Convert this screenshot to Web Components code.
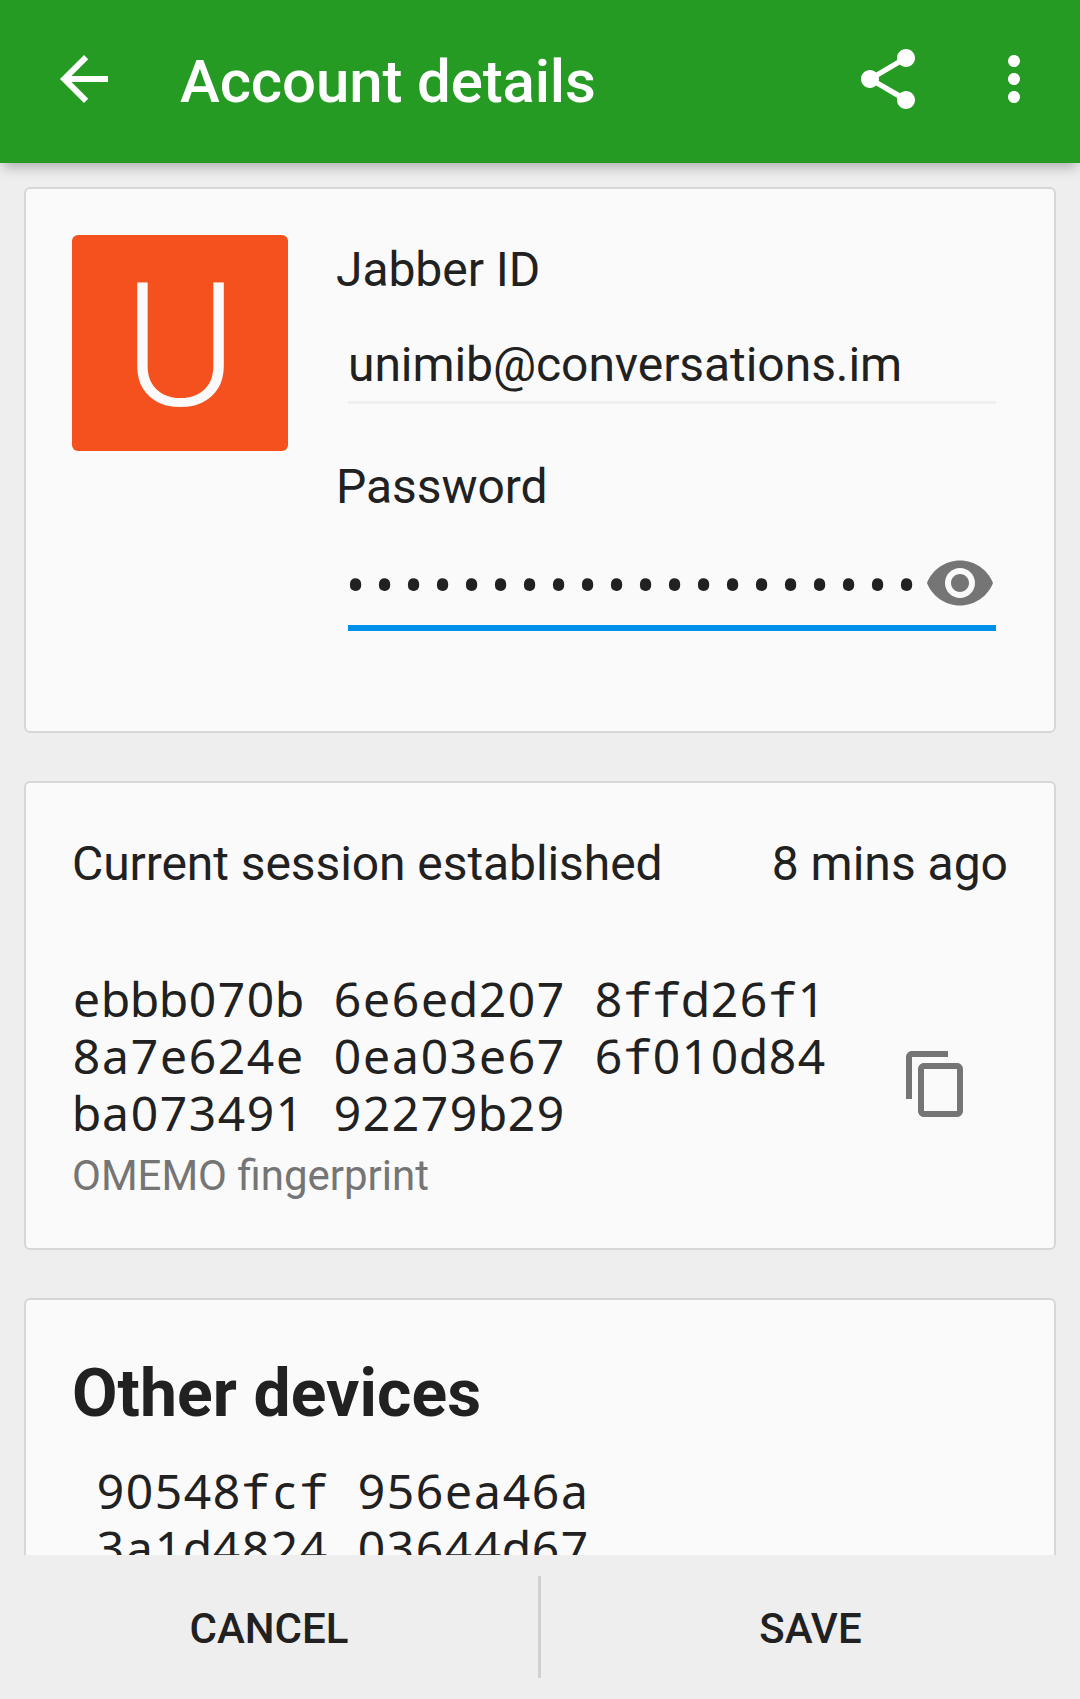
<!DOCTYPE html>
<html lang="en">
<head>
<meta charset="utf-8">
<title>Account details</title>
<style>
  html, body { margin: 0; height: 100%; }
  body { background: #eeeeee; color: #212121; font-family: Roboto, "Liberation Sans", sans-serif; }
</style>
</head>
<body>
<account-screen></account-screen>
<script>
const define = (name, html, setup) => {
  const template = document.createElement('template');
  template.innerHTML = html;
  customElements.define(name, class extends HTMLElement {
    constructor() {
      super();
      this.attachShadow({ mode: 'open' }).append(template.content.cloneNode(true));
    }
    connectedCallback() { if (setup) setup(this, this.shadowRoot); }
  });
};

const ICONS = {
  back: 'M20 11H7.83l5.59-5.59L12 4l-8 8 8 8 1.41-1.41L7.83 13H20v-2z',
  share: 'M18 16c-.76 0-1.44.3-1.96.77L8.91 12.7c.05-.23.09-.46.09-.7s-.04-.47-.09-.7l7.05-4.11c.54.5 1.25.81 2.04.81 1.66 0 3-1.34 3-3s-1.34-3-3-3-3 1.34-3 3c0 .24.04.47.09.7L8.04 9.81C7.5 9.31 6.79 9 6 9c-1.66 0-3 1.34-3 3s1.34 3 3 3c.79 0 1.5-.31 2.04-.81l7.05 4.12c-.05.22-.09.45-.09.69 0 1.66 1.34 3 3 3s3-1.34 3-3-1.34-3-3-3z',
  more: 'M12 8c1.1 0 2-.9 2-2s-.9-2-2-2-2 .9-2 2 .9 2 2 2zm0 2c-1.1 0-2 .9-2 2s.9 2 2 2 2-.9 2-2-.9-2-2-2zm0 6c-1.1 0-2 .9-2 2s.9 2 2 2 2-.9 2-2-.9-2-2-2z',
  eye: 'M12 4.5C7 4.5 2.73 7.61 1 12c1.73 4.39 6 7.5 11 7.5s9.27-3.11 11-7.5c-1.73-4.39-6-7.5-11-7.5zM12 17c-2.76 0-5-2.24-5-5s2.24-5 5-5 5 2.24 5 5-2.24 5-5 5zm0-8c-1.66 0-3 1.34-3 3s1.34 3 3 3 3-1.34 3-3-1.34-3-3-3z',
  copy: 'M16 1H4c-1.1 0-2 .9-2 2v14h2V3h12V1zm3 4H8c-1.1 0-2 .9-2 2v14c0 1.1.9 2 2 2h11c1.1 0 2-.9 2-2V7c0-1.1-.9-2-2-2zm0 16H8V7h11v14z'
};

define('md-icon', `
  <style>:host { display: block; width: 72px; height: 72px; flex: none; } svg { display: block; }</style>
  <svg width="72" height="72" viewBox="0 0 24 24" fill="currentColor"><path/></svg>`,
  (el, root) => root.querySelector('path').setAttribute('d', ICONS[el.getAttribute('name')]));

define('app-bar', `
  <style>
    :host { display: flex; align-items: flex-start; box-sizing: border-box; height: 163px; flex: none;
      padding: 43px 30px 0 48px; background: #259b24; color: #fff; position: relative; z-index: 1;
      box-shadow: 0 7px 12px -3px rgba(0,0,0,.28); }
    h1 { margin: 3px auto 0 60px; font: 500 60px/71px Roboto, sans-serif; letter-spacing: -.14px; }
    .actions { display: flex; gap: 54px; }
  </style>
  <md-icon name="back"></md-icon>
  <h1><slot></slot></h1>
  <div class="actions"><md-icon name="share"></md-icon><md-icon name="more"></md-icon></div>`);

define('info-card', `
  <style>
    :host { display: block; box-sizing: border-box; flex: none; background: #fafafa;
      border: 2px solid #d6d6d6; border-radius: 6px; padding: 46px; }
  </style>
  <slot></slot>`);

define('letter-avatar', `
  <style>
    :host { display: flex; justify-content: center; box-sizing: border-box; width: 216px; height: 216px; flex: none;
      padding: 3px 0 0 1px; border-radius: 6px; background: #f4511e; color: #fafafa; font: 300 173px/216px Roboto, sans-serif; }
  </style>
  <slot></slot>`);

/* Text set on a fixed pitch: every character is centred in its own cell.
   Most glyphs come from the proportional face, whose zero has no slash and whose
   one has no foot; the narrow f is taken from the wider monospaced face. */
define('pitch-text', `
  <style>
    :host { display: block; }
    svg { display: block; overflow: visible; }
    text { font: 48px "Noto Sans", sans-serif; fill: currentColor; text-anchor: middle; white-space: pre; }
    tspan { font-family: "Noto Sans Mono", "Noto Sans", sans-serif; }
    :host([masked]) text { font: 51px "Noto Sans Mono", "Noto Sans", sans-serif; }
  </style>
  <svg><text></text></svg>`,
  (el, root) => {
    const value = el.getAttribute('value');
    const masked = el.hasAttribute('masked');
    const lead = masked ? 7.5 : 14.5;
    const svg = root.querySelector('svg'), text = root.querySelector('text');
    svg.setAttribute('width', value.length * 29);
    svg.setAttribute('height', 57);
    text.setAttribute('y', masked ? 48 : 45);
    text.setAttribute('x', [...value].map((c, i) => lead + i * 29).join(' '));
    text.innerHTML = value.replace(/f+/g, '<tspan>$&</tspan>');
  });

define('form-field', `
  <style>
    :host { display: block; }
    label { display: block; font-size: 48px; line-height: 57px; letter-spacing: -.06px; }
    .value { display: flex; align-items: center; justify-content: space-between; margin-left: 12px;
      font-size: 48px; line-height: 57px; letter-spacing: -.06px; padding: 38px 0 8px; border-bottom: 3px solid #f0f0f0; }
    :host([focused]) .value { padding: 32px 0 6px; border-bottom: 6px solid #0091ea; }
  </style>
  <label></label>
  <div class="value"><slot></slot></div>`,
  (el, root) => { root.querySelector('label').textContent = el.getAttribute('label'); });

define('button-bar', `
  <style>
    :host { display: flex; align-items: stretch; flex: none; height: 144px; background: #eeeeee; }
    div { flex: 1; display: flex; justify-content: center; padding-top: 49px; font: 500 42px/49px Roboto, sans-serif; }
    .first { flex: 0 0 538px; }
    i { width: 3px; margin: 21px 0; background: #d0d0d0; }
  </style>
  <div class="first"><slot name="left"></slot></div><i></i><div><slot name="right"></slot></div>`);

define('account-screen', `
  <style>
    :host { display: flex; flex-direction: column; width: 1080px; height: 1699px; overflow: hidden; }
    main { flex: 1; min-height: 0; overflow: hidden; display: flex; flex-direction: column; gap: 48px; padding: 24px 24px 0; }
    .credentials { height: 546px; }
    .login { display: flex; gap: 48px; }
    .fields { flex: 1; display: flex; flex-direction: column; gap: 54px; padding: 6px 12px 0 0; }
    .session { height: 469px; }
    .row { display: flex; justify-content: space-between; font-size: 48px; line-height: 57px; padding-top: 6px; }
    .row span:first-child { letter-spacing: -.08px; }
    .key { display: flex; justify-content: space-between; align-items: center; margin-top: 80px; padding-right: 36px; }
    .key md-icon { margin-bottom: 4px; }
    .caption { font-size: 42px; line-height: 49px; color: #757575; margin-top: 8px; }
    .devices { height: 460px; }
    h2 { margin: 9px 0 32px; font: 700 66px/77px Roboto, sans-serif; letter-spacing: .07px; }
    .indent { padding-left: 24px; }
  </style>
  <app-bar>Account details</app-bar>
  <main>
    <info-card class="credentials">
      <div class="login">
        <letter-avatar>U</letter-avatar>
        <div class="fields">
          <form-field label="Jabber ID">unimib@conversations.im</form-field>
          <form-field label="Password" focused><pitch-text masked value="••••••••••••••••••••" style="width:570px"></pitch-text><md-icon name="eye" style="color:#757575"></md-icon></form-field>
        </div>
      </div>
    </info-card>
    <info-card class="session">
      <div class="row"><span>Current session established</span><span>8 mins ago</span></div>
      <div class="key">
        <div>
          <pitch-text value="ebbb070b 6e6ed207 8ffd26f1"></pitch-text>
          <pitch-text value="8a7e624e 0ea03e67 6f010d84"></pitch-text>
          <pitch-text value="ba073491 92279b29"></pitch-text>
          <div class="caption">OMEMO fingerprint</div>
        </div>
        <md-icon name="copy" style="color:#757575"></md-icon>
      </div>
    </info-card>
    <info-card class="devices">
      <h2>Other devices</h2>
      <div class="indent">
        <pitch-text value="90548fcf 956ea46a"></pitch-text>
        <pitch-text value="3a1d4824 03644d67"></pitch-text>
      </div>
    </info-card>
  </main>
  <button-bar><span slot="left">CANCEL</span><span slot="right">SAVE</span></button-bar>`);
</script>
</body>
</html>
